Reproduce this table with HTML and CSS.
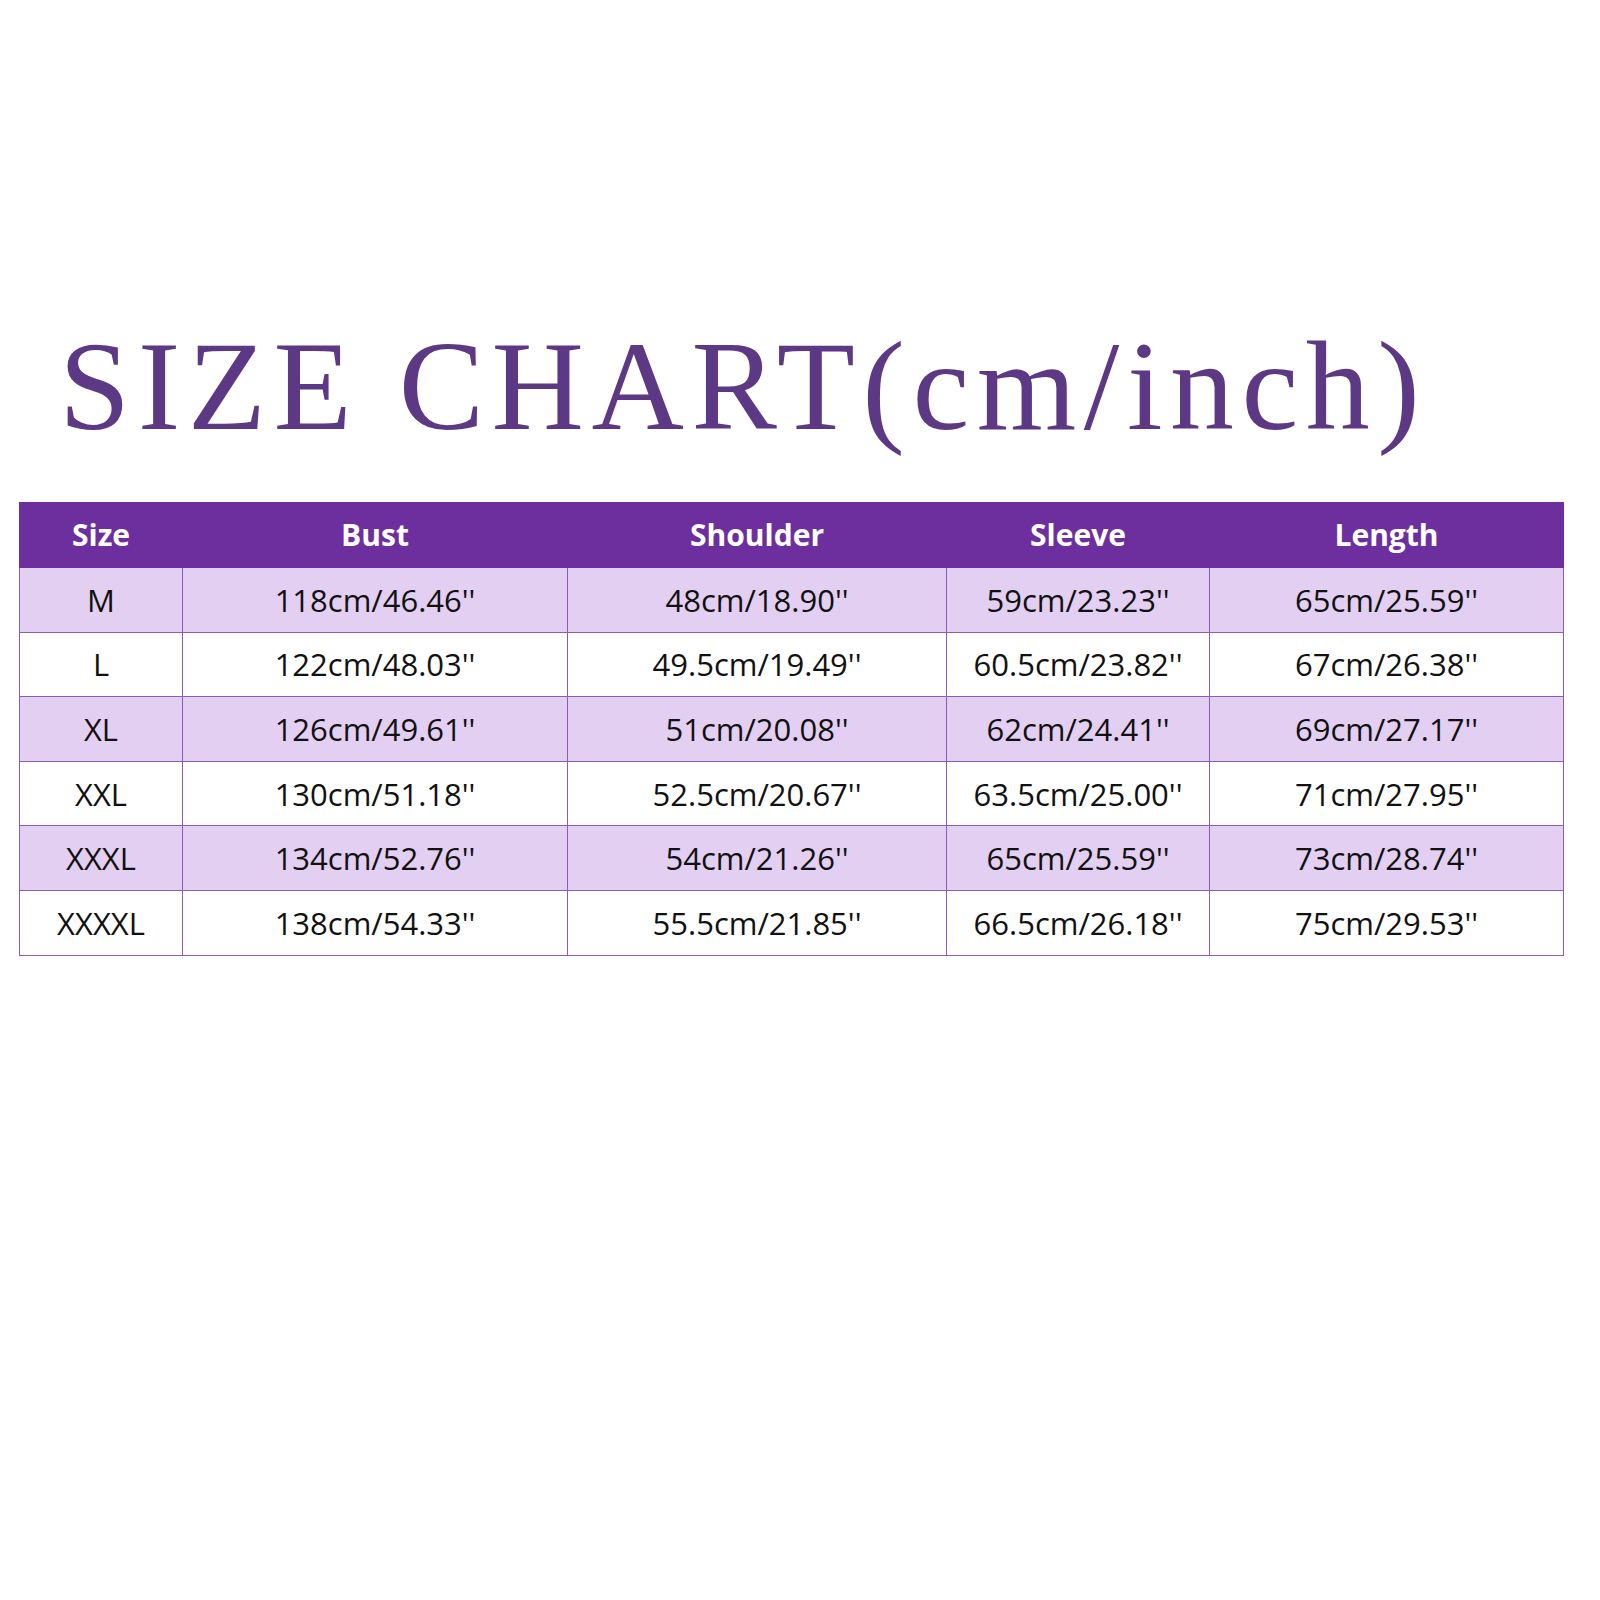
FILE: index.html
```html
<!DOCTYPE html>
<html>
<head>
<meta charset="utf-8">
<link rel="stylesheet" href="styles.css">
</head>
<body>
<div class="page">
  <h1 class="title">SIZE CHART(cm/inch)</h1>
  <table class="chart">
    <colgroup>
      <col class="c1"><col class="c2"><col class="c3"><col class="c4"><col class="c5">
    </colgroup>
    <thead>
      <tr><th>Size</th><th>Bust</th><th>Shoulder</th><th>Sleeve</th><th>Length</th></tr>
    </thead>
    <tbody>
      <tr class="alt"><td>M</td><td>118cm/46.46''</td><td>48cm/18.90''</td><td>59cm/23.23''</td><td>65cm/25.59''</td></tr>
      <tr><td>L</td><td>122cm/48.03''</td><td>49.5cm/19.49''</td><td>60.5cm/23.82''</td><td>67cm/26.38''</td></tr>
      <tr class="alt"><td>XL</td><td>126cm/49.61''</td><td>51cm/20.08''</td><td>62cm/24.41''</td><td>69cm/27.17''</td></tr>
      <tr><td>XXL</td><td>130cm/51.18''</td><td>52.5cm/20.67''</td><td>63.5cm/25.00''</td><td>71cm/27.95''</td></tr>
      <tr class="alt"><td>XXXL</td><td>134cm/52.76''</td><td>54cm/21.26''</td><td>65cm/25.59''</td><td>73cm/28.74''</td></tr>
      <tr><td>XXXXL</td><td>138cm/54.33''</td><td>55.5cm/21.85''</td><td>66.5cm/26.18''</td><td>75cm/29.53''</td></tr>
    </tbody>
  </table>
</div>
</body>
</html>
```

FILE: styles.css
```css
html, body {
  margin: 0;
  padding: 0;
  background: #ffffff;
}
.page {
  width: 1600px;
  height: 1600px;
  padding: 0 37px 0 19px;
  box-sizing: border-box;
}
.title {
  margin: 0;
  padding: 316px 0 0 40px;
  height: 502px;
  box-sizing: border-box;
  font-family: "Liberation Serif", "Times New Roman", serif;
  font-weight: normal;
  font-size: 128px;
  line-height: 140px;
  letter-spacing: 7.5px;
  color: #5d3985;
  white-space: nowrap;
}
.chart {
  width: 1544px;
  border-collapse: collapse;
  table-layout: fixed;
  font-family: "Open Sans", "Noto Sans", sans-serif;
}
.c1 { width: 163px; }
.c2 { width: 385px; }
.c3 { width: 379px; }
.c4 { width: 263px; }
.c5 { width: 354px; }
.chart th {
  background: #6e2f9e;
  color: #ffffff;
  font-weight: 700;
  font-size: 30px;
  height: 62px;
  padding: 0 0 2px;
  text-align: center;
  border: 1px solid #6e2f9e;
}
.chart td {
  height: 63.6px;
  padding: 0;
  text-align: center;
  font-size: 31px;
  color: #111111;
  border: 1px solid #8a5dbb;
}
.chart tr.alt td {
  background: #e2cff1;
}
```
